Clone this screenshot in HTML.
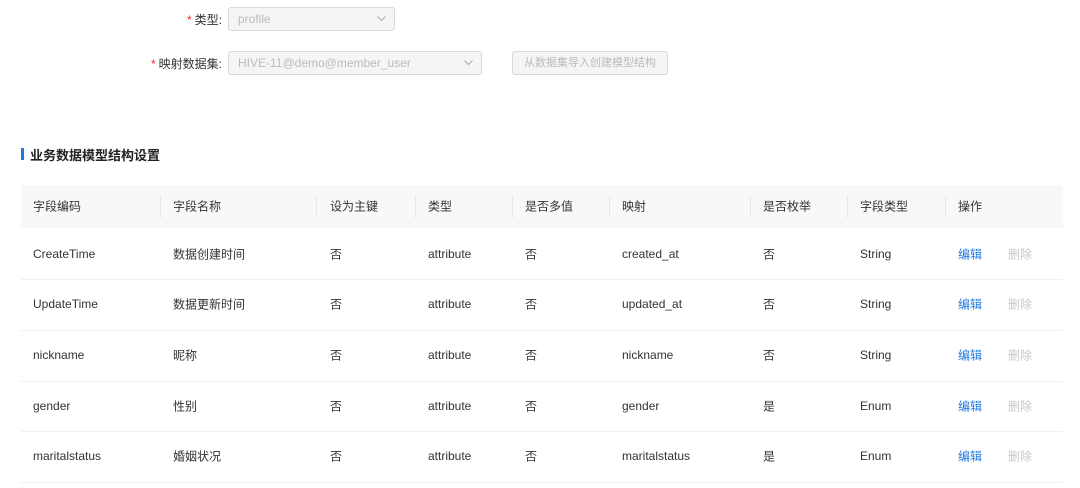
<!DOCTYPE html><html><head><meta charset="utf-8"><style>
body{margin:0;width:1080px;height:488px;background:#fff;font-family:"Liberation Sans","Noto Sans CJK SC",sans-serif;font-size:12px;color:#333;position:relative;overflow:hidden}
.a{position:absolute}
.lbl{position:absolute;right:858px;font-size:12px;color:#333}
.lbl b{color:#f5222d;font-weight:normal;margin-right:3px}
.sel{position:absolute;background:#f5f5f5;border:1px solid #d9d9d9;border-radius:3px;box-sizing:border-box;color:#bbb;padding-left:9px;line-height:22px}
.sel svg{position:absolute;right:8px;top:8px}
.th{position:absolute;top:185px;left:21px;width:1042px;height:43px;background:#f7f8fa}
.sep{position:absolute;top:196px;width:1px;height:22px;background:#e8e8e8}
.line{position:absolute;left:21px;width:1042px;height:1px;background:#f0f0f0}
.c{position:absolute;transform:translateY(-50%);white-space:nowrap}
</style></head><body>
<div class="lbl" style="top:11px"><b>*</b>类型:</div>
<div class="sel" style="left:228px;top:7px;width:167px;height:24px">profile<svg width="9" height="6"><path d="M0.5 0.5L4.5 4.5L8.5 0.5" fill="none" stroke="#aaa"/></svg></div>
<div class="lbl" style="top:55px"><b>*</b>映射数据集:</div>
<div class="sel" style="left:228px;top:51px;width:254px;height:24px">HIVE-11@demo@member_user<svg width="9" height="6"><path d="M0.5 0.5L4.5 4.5L8.5 0.5" fill="none" stroke="#aaa"/></svg></div>
<div class="sel" style="left:512px;top:51px;width:156px;height:24px;padding:0;text-align:center;font-size:11px">从数据集导入创建模型结构</div>
<div class="a" style="left:21px;top:148px;width:3px;height:12px;background:#1f7ae0"></div>
<div class="a" style="left:30px;top:145px;font-size:13px;font-weight:bold;color:#222">业务数据模型结构设置</div>
<div class="th"></div>
<div class="sep" style="left:160px"></div><div class="sep" style="left:316px"></div><div class="sep" style="left:415px"></div><div class="sep" style="left:512px"></div><div class="sep" style="left:609px"></div><div class="sep" style="left:750px"></div><div class="sep" style="left:847px"></div><div class="sep" style="left:945px"></div>
<div class="line" style="top:279px"></div><div class="line" style="top:330px"></div><div class="line" style="top:381px"></div><div class="line" style="top:431px"></div><div class="line" style="top:482px"></div>
<div id="t"></div>
<script>
const xs=[33,173,330,428,525,622,763,860,958,1008];
const rows=[[206,"字段编码","字段名称","设为主键","类型","是否多值","映射","是否枚举","字段类型","操作",""],
[254,"CreateTime","数据创建时间","否","attribute","否","created_at","否","String","编辑","删除"],
[304,"UpdateTime","数据更新时间","否","attribute","否","updated_at","否","String","编辑","删除"],
[355,"nickname","昵称","否","attribute","否","nickname","否","String","编辑","删除"],
[406,"gender","性别","否","attribute","否","gender","是","Enum","编辑","删除"],
[456,"maritalstatus","婚姻状况","否","attribute","否","maritalstatus","是","Enum","编辑","删除"]];
let h="";rows.forEach((r,ri)=>{for(let i=0;i<10;i++){let col=ri==0?"#333":(i==8?"#1f7ae0":i==9?"#c8c8c8":"#333");h+=`<div class="c" style="left:${xs[i]}px;top:${r[0]}px;color:${col}">${r[i+1]}</div>`}});
document.getElementById("t").innerHTML=h;
</script>
</body></html>
